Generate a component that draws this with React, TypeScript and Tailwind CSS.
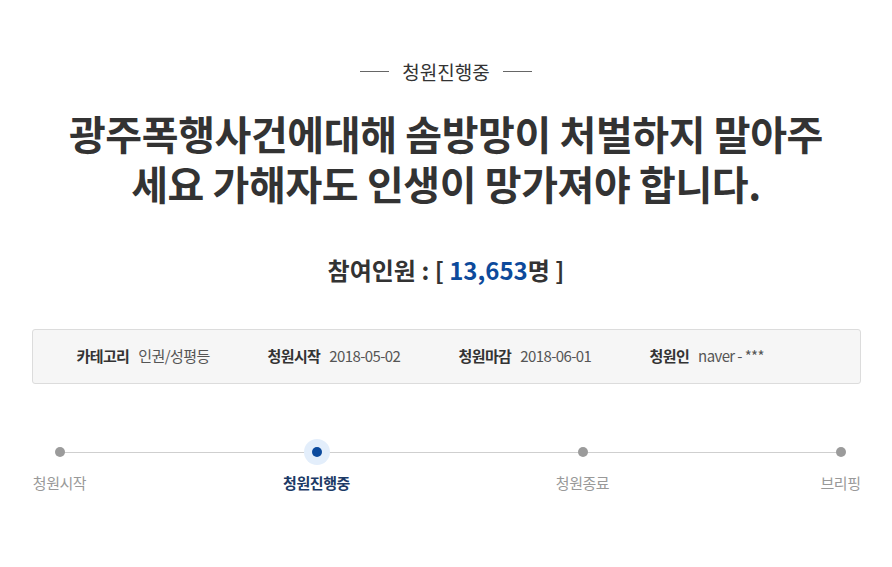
import React from "react";

const FONT = { fontFamily: '"Noto Sans CJK KR", "Noto Sans", sans-serif' };

const infoItems = [
  { label: "카테고리", value: "인권/성평등" },
  { label: "청원시작", value: "2018-05-02" },
  { label: "청원마감", value: "2018-06-01" },
  { label: "청원인", value: "naver - ***" },
];

const steps = [
  { name: "청원시작", active: false, width: "w-[56px]", ml: "ml-0" },
  { name: "청원진행중", active: true, width: "w-[70px]", ml: "ml-[194px]" },
  { name: "청원종료", active: false, width: "w-[56px]", ml: "ml-[203px]" },
  { name: "브리핑", active: false, width: "w-[40px]", ml: "ml-[210px]" },
];

const App = () => {
  return (
    <div className="min-h-[567px] w-full bg-white text-[#333]" style={FONT}>
      <div className="mx-auto w-[829px] pt-[58px]">
        {/* 상태 */}
        <div className="flex items-center justify-center gap-[13px]">
          <span className="h-px w-[29px] bg-[#666]" />
          <span className="text-[19px] leading-[27px] text-[#333]">청원진행중</span>
          <span className="h-px w-[29px] bg-[#666]" />
        </div>

        {/* 제목 */}
        <h1 className="mx-auto mt-[23px] w-[770px] text-center text-[40px] font-bold leading-[50px] tracking-[-0.01em] text-[#333]">
          광주폭행사건에대해 솜방망이 처벌하지 말아주세요 가해자도 인생이 망가져야 합니다.
        </h1>

        {/* 참여인원 */}
        <p className="mt-[46px] text-center text-[24px] font-bold leading-[32px] text-[#333]">
          참여인원 : [ <span className="text-[#0d4a9b]">13,653</span>명 ]
        </p>

        {/* 정보 박스 */}
        <div className="mt-[43px] flex h-[55px] items-center rounded-[3px] border border-[#dcdcdc] bg-[#f6f6f6] pl-[44px] text-[15px] tracking-[-0.04em]">
          {infoItems.map((item) => (
            <div key={item.label} className="flex w-[191px] items-center gap-[9px]">
              <span className="font-bold text-[#333]">{item.label}</span>
              <span className="text-[#555]">{item.value}</span>
            </div>
          ))}
        </div>

        {/* 진행 단계 */}
        <div className="relative mt-[55px]">
          <div className="absolute left-[28px] right-[20px] top-[13px] h-px bg-[#cfcfcf]" />
          <div className="relative flex">
            {steps.map((s) => (
              <div key={s.name} className={`flex flex-col items-center ${s.width} ${s.ml}`}>
                <div className="flex h-[26px] w-[26px] items-center justify-center">
                  {s.active ? (
                    <span className="flex h-[26px] w-[26px] items-center justify-center rounded-full bg-[#e3eefb]">
                      <span className="h-[10px] w-[10px] rounded-full bg-[#0b4a9d]" />
                    </span>
                  ) : (
                    <span className="h-[10px] w-[10px] rounded-full bg-[#9b9b9b]" />
                  )}
                </div>
                <span
                  className={
                    s.active
                      ? "mt-[7px] whitespace-nowrap text-[15px] font-bold leading-[22px] tracking-[-0.03em] text-[#1c3a66]"
                      : "mt-[7px] whitespace-nowrap text-[15px] leading-[22px] tracking-[-0.03em] text-[#999]"
                  }
                >
                  {s.name}
                </span>
              </div>
            ))}
          </div>
        </div>
      </div>
    </div>
  );
};

export default App;
